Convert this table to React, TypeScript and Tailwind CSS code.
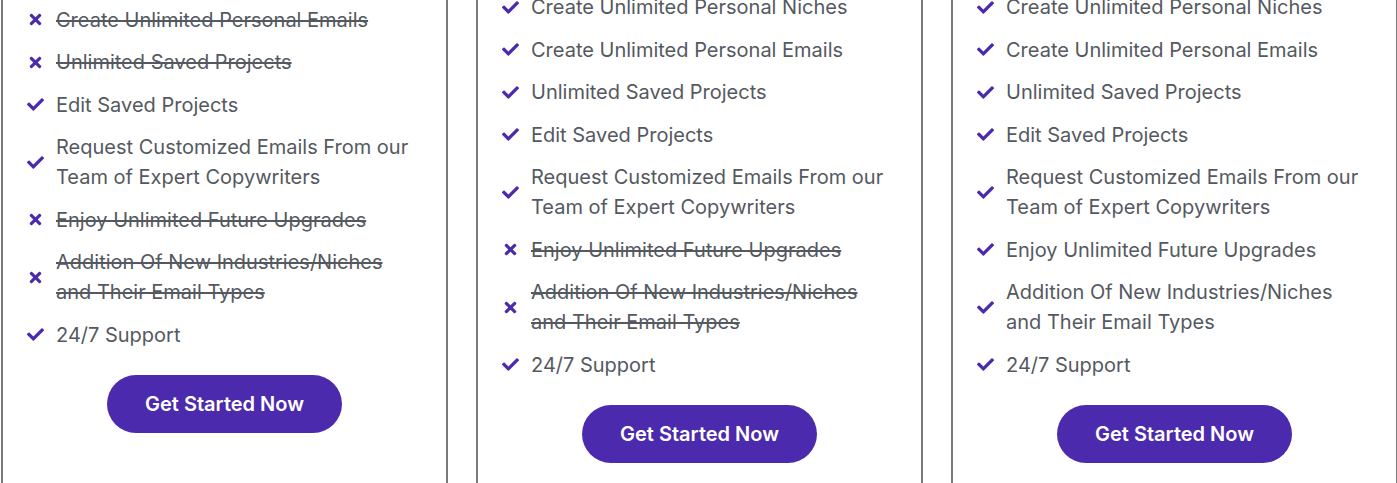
import { FaCheck, FaTimes } from "react-icons/fa";

type Feature = { label: string; included: boolean };

const allFeatures = [
  "Create Unlimited Personal Niches",
  "Create Unlimited Personal Emails",
  "Unlimited Saved Projects",
  "Edit Saved Projects",
  "Request Customized Emails From our Team of Expert Copywriters",
  "Enjoy Unlimited Future Upgrades",
  "Addition Of New Industries/Niches and Their Email Types",
  "24/7 Support",
];

const plans: { name: string; features: Feature[]; offset: boolean }[] = [
  {
    name: "basic",
    offset: false,
    features: allFeatures.map((label, i) => ({
      label,
      included: ![0, 1, 2, 5, 6].includes(i),
    })),
  },
  {
    name: "pro",
    offset: true,
    features: allFeatures.map((label, i) => ({
      label,
      included: ![5, 6].includes(i),
    })),
  },
  {
    name: "agency",
    offset: true,
    features: allFeatures.map((label) => ({ label, included: true })),
  },
];

function FeatureItem({ feature }: { feature: Feature }) {
  return (
    <li className="flex items-center">
      <span className="flex w-[29px] shrink-0 items-center text-[#4b2aad]">
        {feature.included ? (
          <FaCheck className="h-[17px] w-[17px]" />
        ) : (
          <FaTimes className="h-[17px] w-[17px]" />
        )}
      </span>
      <span
        className={
          feature.included
            ? "text-[20px] leading-[30px] text-[#54595f]"
            : "text-[20px] leading-[30px] text-[#54595f] line-through"
        }
      >
        {feature.label}
      </span>
    </li>
  );
}

function PlanCard({ features, offset }: { features: Feature[]; offset: boolean }) {
  return (
    <div
      className={
        offset
          ? "mt-[30px] w-[447px] shrink-0 border-2 border-[#7a7a7a] pt-[20px] pr-[32px] pb-[80px] pl-[24px]"
          : "w-[447px] shrink-0 border-2 border-[#7a7a7a] pt-[20px] pr-[32px] pb-[80px] pl-[24px]"
      }
    >
      <ul className="flex flex-col gap-y-[12.5px]">
        {features.map((f) => (
          <FeatureItem key={f.label} feature={f} />
        ))}
      </ul>
      <div className="mt-[25px] flex justify-center pl-[8px]">
        <button className="h-[58px] w-[235px] rounded-full bg-[#4b2aad] text-[20px] font-semibold text-white">
          Get Started Now
        </button>
      </div>
    </div>
  );
}

export default function App() {
  return (
    <div
      className="h-[483px] w-[1397px] overflow-hidden bg-white"
      style={{ fontFamily: "Inter, 'Noto Sans', sans-serif" }}
    >
      <div className="-mt-[60px] flex items-start gap-[28px] pl-px">
        {plans.map((p) => (
          <PlanCard key={p.name} features={p.features} offset={p.offset} />
        ))}
      </div>
    </div>
  );
}
